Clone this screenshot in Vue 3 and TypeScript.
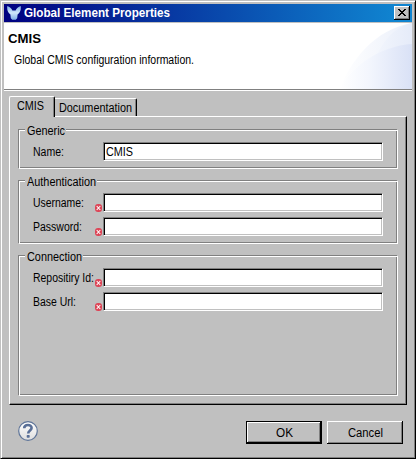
<script setup lang="ts">
interface Field {
  label: string
  width: number
  value: string
  required: boolean
}
interface Group {
  id: string
  title: string
  width: number
  fields: Field[]
}

const groups: Group[] = [
  {
    id: 'generic',
    title: 'Generic',
    width: 38,
    fields: [{ label: 'Name:', width: 31, value: 'CMIS', required: false }],
  },
  {
    id: 'authentication',
    title: 'Authentication',
    width: 69,
    fields: [
      { label: 'Username:', width: 51, value: '', required: true },
      { label: 'Password:', width: 49, value: '', required: true },
    ],
  },
  {
    id: 'connection',
    title: 'Connection',
    width: 55,
    fields: [
      { label: 'Repositiry Id:', width: 61, value: '', required: true },
      { label: 'Base Url:', width: 43, value: '', required: true },
    ],
  },
]

// Condenses a label horizontally so that it takes up the given width.
const vFit = {
  mounted(el: HTMLElement, binding: { value: number }) {
    const natural = el.getBoundingClientRect().width
    el.style.transform = `scaleX(${binding.value / natural})`
    el.style.width = `${binding.value}px`
  },
}
</script>

<template>
  <div class="window">
    <header class="titlebar">
      <svg class="logo" width="14" height="14" viewBox="0 0 14 14">
        <defs>
          <linearGradient id="logo-fill" x1="0" y1="0" x2="0" y2="1">
            <stop offset="0" stop-color="#7fb0e6" />
            <stop offset=".5" stop-color="#cfe6fb" />
            <stop offset="1" stop-color="#7eaee6" />
          </linearGradient>
        </defs>
        <path
          d="M.3 0C2.6.6 4.6 2.6 5.4 4.6H8.6C9.4 2.6 11.4.6 13.7 0 14.2 3.8 13 6.8 10.6 8.4L10.2 12.2 8.8 13.8H5.2L3.8 12.2 3.4 8.4C1 6.8-.2 3.8.3 0Z"
          fill="url(#logo-fill)"
        />
      </svg>
      <h1><span v-fit="146" class="fit">Global Element Properties</span></h1>
      <button class="close" aria-label="Close">
        <svg width="8" height="7" viewBox="0 0 8 7" shape-rendering="crispEdges">
          <path
            d="M0 0h2v1h-2zM6 0h2v1h-2zM1 1h2v1h-2zM5 1h2v1h-2zM2 2h4v1h-4zM3 3h2v1h-2zM2 4h4v1h-4zM1 5h2v1h-2zM5 5h2v1h-2zM0 6h2v1h-2zM6 6h2v1h-2z"
          />
        </svg>
      </button>
    </header>

    <section class="banner">
      <div class="banner-text">
        <h2><span v-fit="33" class="fit">CMIS</span></h2>
        <p><span v-fit="180" class="fit">Global CMIS configuration information.</span></p>
      </div>
      <svg class="swoosh" width="72" height="66" viewBox="0 0 72 66">
        <defs>
          <linearGradient id="sw-a" gradientUnits="userSpaceOnUse" x1="0" y1="0" x2="72" y2="0">
            <stop offset="0" stop-color="#fff" />
            <stop offset="1" stop-color="#eaeffa" />
          </linearGradient>
          <linearGradient id="sw-b" gradientUnits="userSpaceOnUse" x1="28" y1="0" x2="72" y2="0">
            <stop offset="0" stop-color="#f5f8fd" />
            <stop offset="1" stop-color="#e5ebf9" />
          </linearGradient>
          <linearGradient id="sw-c" gradientUnits="userSpaceOnUse" x1="0" y1="0" x2="72" y2="0">
            <stop offset="0" stop-color="#fff" />
            <stop offset=".4" stop-color="#f3f6fd" />
            <stop offset="1" stop-color="#d9e1f6" />
          </linearGradient>
        </defs>
        <path d="M0 66C10 38 35 6 72 0V66Z" fill="url(#sw-a)" />
        <path d="M34 38C42 20 52 5 72 0V66H34Z" fill="url(#sw-b)" />
        <path d="M0 66C12 43 40 23 72 21V66Z" fill="url(#sw-c)" />
      </svg>
    </section>

    <main class="content">
      <nav class="tabs">
        <div class="tab active"><span v-fit="27" class="fit">CMIS</span></div>
        <div class="tab"><span v-fit="73" class="fit">Documentation</span></div>
      </nav>
      <div class="panel">
        <section v-for="group in groups" :key="group.id" class="group" :class="group.id">
          <h3><span v-fit="group.width" class="fit">{{ group.title }}</span></h3>
          <div v-for="field in group.fields" :key="field.label" class="row">
            <label><span v-fit="field.width" class="fit">{{ field.label }}</span></label>
            <svg v-if="field.required" class="error" width="7" height="8" viewBox="0 0 7 8">
              <rect width="7" height="8" rx="3" fill="#dd4456" />
              <path d="M1.7 2L5.3 6M5.3 2L1.7 6" stroke="#fff" stroke-width="1.1" />
            </svg>
            <div class="input">
              <span v-if="field.value" v-fit="27" class="fit">{{ field.value }}</span>
            </div>
          </div>
        </section>
      </div>
    </main>

    <footer class="footer">
      <svg class="help" width="20" height="20" viewBox="0 0 20 20">
        <defs>
          <linearGradient id="help-fill" x1="0" y1="0" x2="0" y2="1">
            <stop offset="0" stop-color="#fff" />
            <stop offset="1" stop-color="#dedede" />
          </linearGradient>
        </defs>
        <circle cx="10" cy="10" r="9.3" fill="url(#help-fill)" stroke="#5f7599" stroke-width="1.2" />
        <path
          d="M6.2 7.2C6.3 2.9 13.7 3 13.6 7 13.5 9.4 10.2 9.5 10.2 12.4"
          fill="none"
          stroke="#596f97"
          stroke-width="2.6"
        />
        <rect x="8.7" y="14" width="3" height="2.8" rx=".7" fill="#596f97" />
      </svg>
      <button class="button default"><span v-fit="17" class="fit">OK</span></button>
      <button class="button"><span v-fit="35" class="fit">Cancel</span></button>
    </footer>
  </div>
</template>

<style>
body {
  margin: 0;
  background: #c0c0c0;
}
</style>

<style scoped>
* {
  box-sizing: border-box;
}
.window {
  width: 416px;
  height: 459px;
  display: flex;
  flex-direction: column;
  background: #c0c0c0;
  border: 1px solid;
  border-color: #c0c0c0 #000 #000 #c0c0c0;
  box-shadow: inset 1px 1px #fff, inset -1px -1px #808080;
  padding: 3px 3px 2px;
  font: 12.5px/14px 'Liberation Sans', sans-serif;
  color: #000;
}
.fit {
  display: inline-block;
  white-space: nowrap;
  transform-origin: 0 50%;
}
h1,
h2,
h3,
p {
  margin: 0;
  font-size: 12.5px;
  line-height: 14px;
}
h3,
p {
  font-weight: normal;
}
button {
  padding: 0;
  border: 0;
  border-radius: 0;
  font: inherit;
  color: #000;
  background: #c0c0c0;
}
.titlebar {
  height: 18px;
  width: 408px;
  flex: none;
  display: flex;
  align-items: center;
  padding: 0 2px 0 3px;
  background: linear-gradient(90deg, #000080, #1084d0 96%);
  color: #fff;
}
.logo {
  margin-right: 3px;
}
.titlebar h1 {
  flex: 1;
}
.close {
  width: 16px;
  height: 14px;
  padding: 0 0 1px 4px;
  box-shadow: inset -1px -1px #000, inset 1px 1px #fff, inset -2px -2px #808080;
}
.close svg {
  display: block;
}
.banner {
  width: 408px;
  height: 68px;
  flex: none;
  margin-top: 1px;
  display: flex;
  justify-content: space-between;
  background: #fff;
  border-bottom: 1px solid #fff;
  box-shadow: inset 0 -1px #808080;
}
.banner-text {
  padding: 9px 0 0 4px;
}
.banner p {
  padding: 7px 0 0 6px;
}
.content {
  padding: 5px 0 0 5px;
}
.tabs {
  display: flex;
  align-items: flex-end;
  height: 20px;
}
.tab {
  height: 18px;
  padding: 2px 0 0 4px;
  width: 82px;
  border-top: 1px solid #fff;
  border-right: 1px solid #000;
  border-radius: 0 2px 0 0;
  box-shadow: inset -1px 0 #808080;
}
.tab.active {
  width: 46px;
  height: 21px;
  margin-bottom: -1px;
  padding: 2px 0 0 7px;
  border-left: 1px solid #fff;
  border-radius: 2px 2px 0 0;
  background: #c0c0c0;
  position: relative;
}
.panel {
  width: 398px;
  height: 289px;
  padding: 12px 8px 0;
  border: 1px solid;
  border-color: #fff #000 #000 #fff;
  box-shadow: inset -1px -1px #808080;
}
.group {
  width: 380px;
  padding: 12px 0 0 14px;
  border: 1px solid #808080;
  border-right-color: #fff;
  border-bottom-color: #fff;
  box-shadow: inset 1px 1px #fff, inset -1px -1px #808080;
}
.generic {
  height: 40px;
}
.authentication {
  height: 64px;
  margin-top: 11px;
}
.connection {
  height: 141px;
  margin-top: 11px;
}
.group h3 {
  width: fit-content;
  height: 14px;
  margin: -18px 0 4px -8px;
  padding: 0 1px 0 2px;
  background: #c0c0c0;
}
.row {
  height: 19px;
  margin-bottom: 5px;
  display: flex;
}
label {
  width: 62px;
  padding: 3px 0 0;
}
.generic .row label {
  width: 70px;
}
.error {
  flex: none;
  margin: 11px 1px 0 0;
}
.input {
  width: 280px;
  height: 19px;
  flex: none;
  padding: 2px 0 0 2px;
  background: #fff;
  border: 1px solid;
  border-color: #808080 #fff #fff #808080;
  box-shadow: inset 1px 1px #000, inset -1px -1px #c0c0c0;
}
.footer {
  display: flex;
  width: 408px;
  padding: 16px 9px 0 14px;
}
.help {
  margin-right: auto;
}
.button {
  width: 76px;
  height: 23px;
  margin-left: 5px;
  box-shadow: inset -1px -1px #000, inset 1px 1px #fff, inset -2px -2px #808080;
}
.default {
  box-shadow: inset 0 0 0 1px #000, inset -2px -2px #000, inset 2px 2px #fff, inset -3px -3px #808080;
}
</style>
